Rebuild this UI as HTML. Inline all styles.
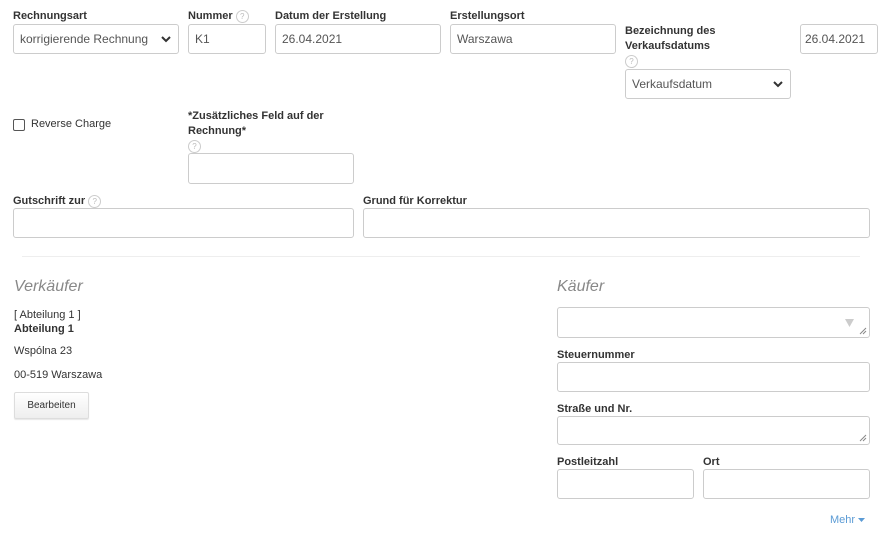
<!DOCTYPE html>
<html><head><meta charset="utf-8"><style>
*{box-sizing:border-box;margin:0;padding:0}
body{width:888px;height:545px;background:#fff;font-family:"Liberation Sans",Arial,sans-serif;color:#333;position:relative;overflow:hidden}
.a{position:absolute}
.l{position:absolute;font-size:11px;font-weight:bold;color:#333;line-height:15px}
.i{position:absolute;border:1px solid #ccc;border-radius:3px;background:#fff;font-size:12px;color:#555;padding-left:6px;display:flex;align-items:center}
.h{display:inline-block;width:13px;height:13px;border:1px solid #ccc;border-radius:50%;font-size:8px;color:#bbb;text-align:center;line-height:11px;font-weight:normal;vertical-align:middle}
.chev{position:absolute;right:7px;top:11px}
.t{position:absolute;font-size:11px;color:#333}
</style></head><body>
<div class="l" style="left:13px;top:9px">Rechnungsart</div>
<div class="i" style="left:13px;top:24px;width:166px;height:30px">korrigierende Rechnung<svg class="chev" width="10" height="7" viewBox="0 0 10 7"><path d="M1 1l4 4 4-4" stroke="#333" stroke-width="2" fill="none"/></svg></div>
<div class="l" style="left:188px;top:9px">Nummer <span class="h">?</span></div>
<div class="i" style="left:188px;top:24px;width:78px;height:30px">K1</div>
<div class="l" style="left:275px;top:9px">Datum der Erstellung</div>
<div class="i" style="left:275px;top:24px;width:166px;height:30px">26.04.2021</div>
<div class="l" style="left:450px;top:9px">Erstellungsort</div>
<div class="i" style="left:450px;top:24px;width:166px;height:30px">Warszawa</div>
<div class="l" style="left:625px;top:24px">Bezeichnung des<br>Verkaufsdatums</div>
<span class="h a" style="left:625px;top:55px">?</span>
<div class="i" style="left:625px;top:69px;width:166px;height:30px">Verkaufsdatum<svg class="chev" width="10" height="7" viewBox="0 0 10 7"><path d="M1 1l4 4 4-4" stroke="#333" stroke-width="2" fill="none"/></svg></div>
<div class="i" style="left:800px;top:24px;width:78px;height:30px;padding-left:4px">26.04.2021</div>

<div class="a" style="left:13px;top:119px;width:12px;height:12px;border:1px solid #555;border-radius:2px"></div>
<div class="t" style="left:31px;top:118px">Reverse Charge</div>
<div class="l" style="left:188px;top:109px">*Zusätzliches Feld auf der<br>Rechnung*</div>
<span class="h a" style="left:188px;top:140px">?</span>
<div class="i" style="left:188px;top:153px;width:166px;height:31px"></div>

<div class="l" style="left:13px;top:194px">Gutschrift zur <span class="h">?</span></div>
<div class="i" style="left:13px;top:208px;width:341px;height:30px"></div>
<div class="l" style="left:363px;top:194px">Grund für Korrektur</div>
<div class="i" style="left:363px;top:208px;width:507px;height:30px"></div>
<div class="a" style="left:22px;top:256px;width:838px;height:1px;background:#eee"></div>

<div class="a" style="left:14px;top:278px;font-size:16px;font-style:italic;color:#888">Verkäufer</div>
<div class="t" style="left:14px;top:309px">[ Abteilung 1 ]</div>
<div class="t" style="left:14px;top:323px;font-weight:bold">Abteilung 1</div>
<div class="t" style="left:14px;top:345px">Wspólna 23</div>
<div class="t" style="left:14px;top:369px">00-519 Warszawa</div>
<div class="a" style="left:14px;top:392px;width:75px;height:27px;border:1px solid #ddd;border-radius:2px;background:linear-gradient(#fff,#eee);font-size:10px;text-align:center;line-height:25px;color:#333;box-shadow:0 1px 1px rgba(0,0,0,.1)">Bearbeiten</div>

<div class="a" style="left:557px;top:278px;font-size:16px;font-style:italic;color:#888">Käufer</div>
<div class="i" style="left:557px;top:307px;width:313px;height:31px"><svg class="a" style="right:15px;top:11px" width="9" height="8"><path d="M0 0h9L4.5 8z" fill="#ccc"/></svg><svg class="a" style="right:2px;bottom:2px" width="8" height="8"><path d="M7 1L1 7M7 4L4 7" stroke="#888" stroke-width="1"/></svg></div>
<div class="l" style="left:557px;top:348px">Steuernummer</div>
<div class="i" style="left:557px;top:362px;width:313px;height:30px"></div>
<div class="l" style="left:557px;top:402px">Straße und Nr.</div>
<div class="i" style="left:557px;top:416px;width:313px;height:29px"><svg class="a" style="right:2px;bottom:2px" width="8" height="8"><path d="M7 1L1 7M7 4L4 7" stroke="#888" stroke-width="1"/></svg></div>
<div class="l" style="left:557px;top:455px">Postleitzahl</div>
<div class="i" style="left:557px;top:469px;width:137px;height:30px"></div>
<div class="l" style="left:703px;top:455px">Ort</div>
<div class="i" style="left:703px;top:469px;width:167px;height:30px"></div>
<div class="a" style="left:830px;top:514px;font-size:11px;color:#5b9bd5">Mehr <svg width="7" height="4" style="vertical-align:middle"><path d="M0 0h7L3.5 4z" fill="#5b9bd5"/></svg></div>
</body></html>
